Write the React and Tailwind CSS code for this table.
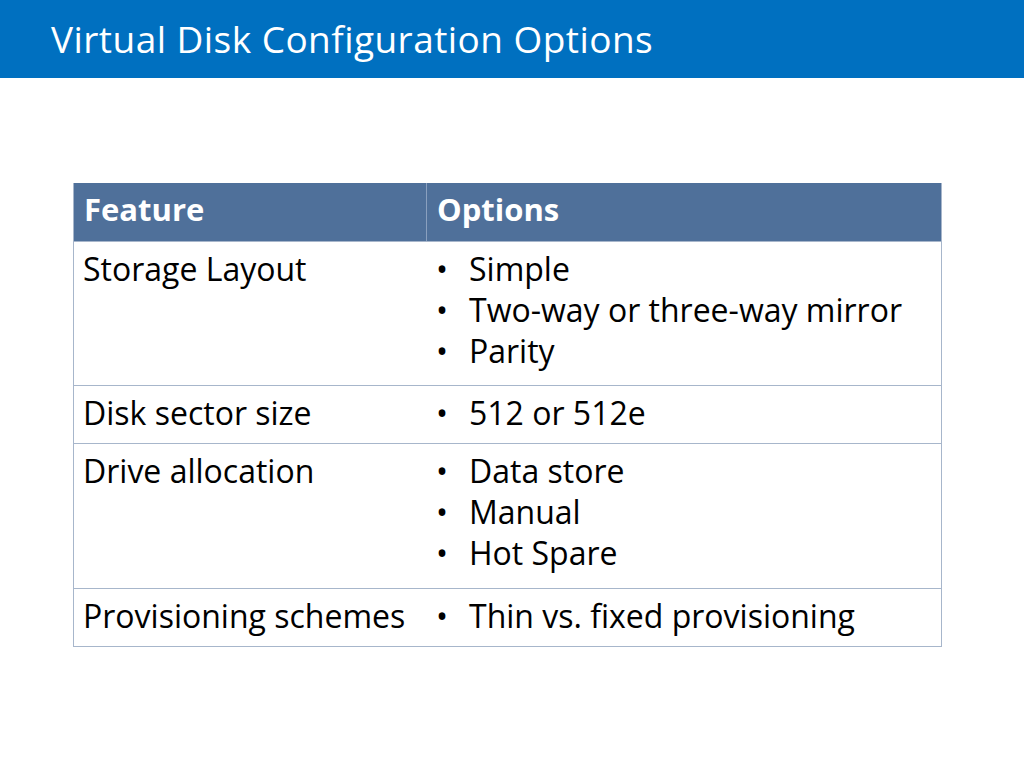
const rows = [
  { feature: "Storage Layout", options: ["Simple", "Two-way or three-way mirror", "Parity"], h: "h-[144px]" },
  { feature: "Disk sector size", options: ["512 or 512e"], h: "h-[58px]" },
  { feature: "Drive allocation", options: ["Data store", "Manual", "Hot Spare"], h: "h-[145px]" },
  { feature: "Provisioning schemes", options: ["Thin vs. fixed provisioning"], h: "h-[58px]" },
];

export default function App() {
  return (
    <div className="w-[1024px] h-[768px] bg-white font-['Open_Sans',sans-serif] overflow-hidden">
      {/* Title bar */}
      <div className="h-[78px] bg-[#0070c0] pl-[51px] pt-[14px]">
        <h1 className="text-white text-[37px] leading-[50px] font-normal tracking-[0.45px]">
          Virtual Disk Configuration Options
        </h1>
      </div>

      {/* Table */}
      <div className="pt-[105px] pl-[73px]">
        <div className="w-[869px] border-x border-b border-[#a7b6cb]">
          <div className="flex h-[58px] bg-[#4f709a] text-white font-bold text-[31px] leading-[42px]">
            <div className="w-[353px] pl-[10px] pt-[5px] border-r border-[#8aa0bf]">Feature</div>
            <div className="flex-1 pl-[10px] pt-[5px]">Options</div>
          </div>
          {rows.map((row, i) => (
            <div key={i} className={`flex ${row.h} border-t border-[#a7b6cb] text-[32px] leading-[41px] text-black`}>
              <div className="w-[353px] pl-[9px] pt-[6px]">{row.feature}</div>
              <div className="flex-1 pt-[6px] pl-[9px]">
                {row.options.map((o) => (
                  <div key={o} className="flex">
                    <span className="w-[33px]">•</span>
                    <span>{o}</span>
                  </div>
                ))}
              </div>
            </div>
          ))}
        </div>
      </div>
    </div>
  );
}
